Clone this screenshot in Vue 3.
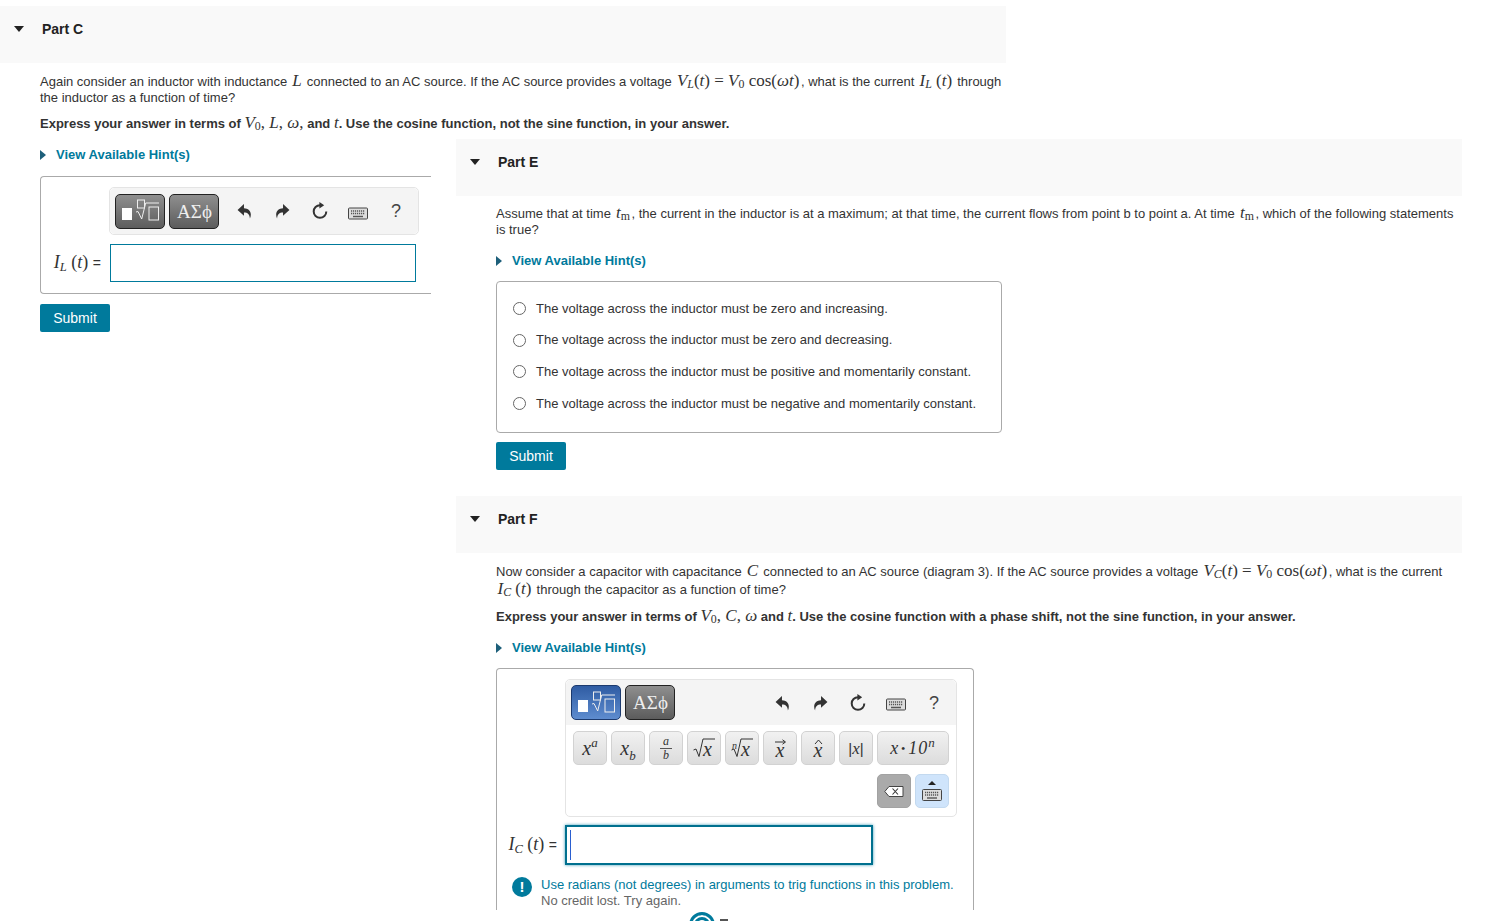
<template>
  <div class="page">
    <section class="part part-left">
      <header class="part-head">
        <span class="caret"></span>
        <h3>Part C</h3>
      </header>
      <div class="part-body">
        <p class="prompt">
          Again consider an inductor with inductance <i class="m big">L</i> connected to an AC source. If the AC source provides a voltage
          <span class="m big"><i>V<sub>L</sub></i>(<i>t</i>) = <i>V</i><sub>0</sub> cos(<i>ωt</i>)</span>, what is the current
          <span class="m big"><i>I<sub>L</sub></i> (<i>t</i>)</span> through the inductor as a function of time?
        </p>
        <p class="prompt strong">
          Express your answer in terms of <span class="m big"><i>V</i><sub>0</sub>, <i>L</i>, <i>ω</i>,</span> and <i class="m big">t</i>. Use the cosine function, not the sine function, in your answer.
        </p>
        <a class="hints"><span class="hint-arrow"></span>View Available Hint(s)</a>
        <div class="answer answer-c">
          <div class="toolbar">
            <div class="toolbar-top">
              <button class="mode">
                <span class="tmpl"></span>
                <svg class="radical" viewBox="0 0 25 22"><rect x="2.5" y="1" width="7" height="8" /><path d="M1 13l2-.5 3.700 7.500 4-16H24" /><rect x="14" y="8" width="9.500" height="13" /></svg>
              </button>
              <button class="mode greek">ΑΣϕ</button>
              <div class="tools">
                <span class="slot"><svg class="tool" viewBox="0 0 14 15"><path :d="undoPath" /></svg></span>
                <span class="slot"><svg class="tool flip" viewBox="0 0 14 15"><path :d="undoPath" /></svg></span>
                <span class="slot"><svg class="reset" viewBox="0 0 18 18"><path class="ring" d="M9 3.200a6.300 6.300 0 1 0 6.300 6.300" /><path d="M8.400 0l4.800 3.200-4.800 3.200z" /></svg></span>
                <span class="slot"><svg class="kb" viewBox="0 0 20 12"><rect x=".5" y=".5" width="19" height="11" rx="1" /><path class="kb-keys" d="M3 3.500h14M3 6h14" /><path class="kb-bar" d="M5 9h10" /></svg></span>
                <span class="slot help">?</span>
              </div>
            </div>
          </div>
          <div class="input-row">
            <label class="m math-label"><i>I<sub>L</sub></i> (<i>t</i>) <span class="eq">=</span></label>
            <div class="input"></div>
          </div>
        </div>
        <button class="submit">Submit</button>
      </div>
    </section>

    <div class="col-right">
      <section class="part part-e">
        <header class="part-head">
          <span class="caret"></span>
          <h3>Part E</h3>
        </header>
        <div class="part-body">
          <p class="prompt">
            Assume that at time <span class="m big"><i>t</i><sub>m</sub></span>, the current in the inductor is at a maximum; at that time, the current flows from point b to point a. At time <span class="m big"><i>t</i><sub>m</sub></span>, which of the following statements is true?
          </p>
          <a class="hints"><span class="hint-arrow"></span>View Available Hint(s)</a>
          <div class="choices">
            <label v-for="c in choices" :key="c" class="choice"><span class="radio"></span>{{ c }}</label>
          </div>
          <button class="submit">Submit</button>
        </div>
      </section>

      <section class="part part-f">
        <header class="part-head">
          <span class="caret"></span>
          <h3>Part F</h3>
        </header>
        <div class="part-body">
          <p class="prompt">
            Now consider a capacitor with capacitance <i class="m big">C</i> connected to an AC source (diagram 3). If the AC source provides a voltage
            <span class="m big"><i>V<sub>C</sub></i>(<i>t</i>) = <i>V</i><sub>0</sub> cos(<i>ωt</i>)</span>, what is the current
            <span class="m big"><i>I<sub>C</sub></i> (<i>t</i>)</span> through the capacitor as a function of time?
          </p>
          <p class="prompt strong">
            Express your answer in terms of <span class="m big"><i>V</i><sub>0</sub>, <i>C</i>, <i>ω</i></span> and <i class="m big">t</i>. Use the cosine function with a phase shift, not the sine function, in your answer.
          </p>
          <a class="hints"><span class="hint-arrow"></span>View Available Hint(s)</a>
          <div class="answer answer-f">
            <div class="toolbar">
              <div class="toolbar-top">
                <button class="mode active">
                  <span class="tmpl"></span>
                  <svg class="radical" viewBox="0 0 25 22"><rect x="2.5" y="1" width="7" height="8" /><path d="M1 13l2-.5 3.700 7.500 4-16H24" /><rect x="14" y="8" width="9.500" height="13" /></svg>
                </button>
                <button class="mode greek">ΑΣϕ</button>
                <div class="tools">
                  <span class="slot"><svg class="tool" viewBox="0 0 14 15"><path :d="undoPath" /></svg></span>
                  <span class="slot"><svg class="tool flip" viewBox="0 0 14 15"><path :d="undoPath" /></svg></span>
                  <span class="slot"><svg class="reset" viewBox="0 0 18 18"><path class="ring" d="M9 3.200a6.300 6.300 0 1 0 6.300 6.300" /><path d="M8.400 0l4.800 3.200-4.800 3.200z" /></svg></span>
                  <span class="slot"><svg class="kb" viewBox="0 0 20 12"><rect x=".5" y=".5" width="19" height="11" rx="1" /><path class="kb-keys" d="M3 3.500h14M3 6h14" /><path class="kb-bar" d="M5 9h10" /></svg></span>
                  <span class="slot help">?</span>
                </div>
              </div>
              <div class="keys">
                <button class="key"><i>x<sup>a</sup></i></button>
                <button class="key"><i>x<sub>b</sub></i></button>
                <button class="key frac"><i>a</i><i>b</i></button>
                <button class="key">
                  <span class="root"><svg viewBox="0 0 22 20"><path d="M.5 12l2.500-1 3 7.500L10 1h12" /></svg><i>x</i></span>
                </button>
                <button class="key">
                  <span class="root"><sup class="root-n">n</sup><svg viewBox="0 0 22 20"><path d="M.5 12l2.500-1 3 7.500L10 1h12" /></svg><i>x</i></span>
                </button>
                <button class="key accent"><svg class="acc" viewBox="0 0 11 6"><path d="M0 3h10M7.500 .8 10.500 3 7.500 5.200" /></svg><i>x</i></button>
                <button class="key accent"><svg class="acc" viewBox="0 0 11 6"><path d="M2 5l3.500-4L9 5" /></svg><i>x</i></button>
                <button class="key abs">|<i>x</i>|</button>
                <button class="key wide"><i>x</i><b class="dot">•</b><i>10<sup>n</sup></i></button>
              </div>
              <div class="keys keys-end">
                <button class="key del"><svg viewBox="0 0 20 11"><path d="M5 .5h14v10H5L.8 5.500z" fill="#fff" stroke="#444" /><path d="M8.500 2.500l5.500 6M14 2.500l-5.500 6" stroke="#333" stroke-width="1.100" /></svg></button>
                <button class="key kbd-toggle"><svg viewBox="0 0 20 22"><path d="M6 5l4-4 4 4z" fill="#222" /><rect x=".5" y="9.500" width="19" height="11" rx="1" fill="#ddd" stroke="#444" /><path d="M3 12.500h14M3 15h14" stroke="#555" stroke-width="1.400" stroke-dasharray="1.200 .8" /><path d="M5 18h10" stroke="#555" stroke-width="1.400" /></svg></button>
              </div>
            </div>
            <div class="input-row">
              <label class="m math-label"><i>I<sub>C</sub></i> (<i>t</i>) <span class="eq">=</span></label>
              <div class="input focused"><span class="cursor"></span></div>
            </div>
            <div class="feedback">
              <span class="alert">!</span>
              <div>
                <div class="alert-title">Use radians (not degrees) in arguments to trig functions in this problem.</div>
                <div class="alert-note">No credit lost. Try again.</div>
              </div>
            </div>
          </div>
        </div>
      </section>
      <span class="peek"></span>
      <span class="peek-text"></span>
    </div>
  </div>
</template>

<script setup>
const undoPath = 'M6.500 1 .5 6.500l6 5.500V8.800c3.600 0 5.200 1.700 5.600 5.700 2.400-5.500-.6-9.500-5.600-9.600z'

const choices = [
  'The voltage across the inductor must be zero and increasing.',
  'The voltage across the inductor must be zero and decreasing.',
  'The voltage across the inductor must be positive and momentarily constant.',
  'The voltage across the inductor must be negative and momentarily constant.',
]
</script>

<style>
html, body { background: #fff; overflow: hidden; }
</style>

<style scoped>
.page {
  display: flex;
  height: 921px;
  overflow: hidden;
  background: #fff;
  color: #333;
  font: 13px/16px "Liberation Sans", Arial, sans-serif;
}
.part-left {
  flex: 0 0 1006px;
  margin: 6px -550px 0 0;
}
.col-right {
  position: relative;
  flex: 0 0 1006px;
  margin-top: 139px;
  z-index: 1;
}
.part-head {
  display: flex;
  align-items: flex-start;
  height: 57px;
  background: #f9f9f9;
  padding-top: 14px;
  box-sizing: border-box;
}
.part-head h3 {
  margin: 0;
  font-size: 14px;
  line-height: 18px;
  font-weight: 700;
  color: #222;
}
.caret {
  width: 0;
  height: 0;
  margin: 6px 18px 0 14px;
  border-left: 5.500px solid transparent;
  border-right: 5.500px solid transparent;
  border-top: 6px solid #222;
}
.part-body { padding: 9px 0 0 40px; }
.prompt { margin: 0 0 8px; width: 966px; }
.part-f .prompt { margin-bottom: 9px; }
.part-e .prompt { margin-top: -1px; }
.strong { font-weight: 700; }
.m { font-family: "Liberation Serif", "Times New Roman", serif; }
.big { font-size: 17px; line-height: 1; margin: 0 1.500px; white-space: nowrap; }
.strong .m { font-weight: 400; margin: 0; }
sub, sup { font-size: 70%; line-height: 0; }
.big sub, .math-label sub { vertical-align: -0.2em; }
.hints {
  display: flex;
  align-items: center;
  margin-top: 15px;
  color: #007a9c;
  font-weight: 700;
}
.hint-arrow {
  width: 0;
  height: 0;
  margin-right: 10px;
  border-top: 5.500px solid transparent;
  border-bottom: 5.500px solid transparent;
  border-left: 6px solid #1d5f7a;
}
.answer {
  box-sizing: border-box;
  margin-top: 13px;
  border: 1px solid #aaa;
  border-radius: 4px;
}
.answer-c {
  width: 391px;
  height: 118px;
  padding: 10px 0 0 68px;
  border-right: 0;
  border-radius: 4px 0 0 4px;
}
.answer-f {
  width: 478px;
  height: 242px;
  margin-top: 12px;
  padding: 10px 0 0 68px;
  border-bottom: 0;
  border-radius: 4px 4px 0 0;
  overflow: hidden;
}
.toolbar {
  box-sizing: border-box;
  width: 310px;
  height: 48px;
  border: 1px solid #e4e4e4;
  border-radius: 5px;
}
.answer-f .toolbar { width: 392px; height: 138px; }
.toolbar-top {
  display: flex;
  align-items: center;
  gap: 4px;
  height: 46px;
  padding-left: 5px;
  box-sizing: border-box;
  background: #f4f4f4;
  border-radius: 5px;
}
.answer-f .toolbar-top { height: 45px; border-radius: 5px 5px 0 0; }
.mode {
  display: flex;
  align-items: center;
  justify-content: center;
  box-sizing: border-box;
  width: 50px;
  height: 35px;
  padding: 0 0 0 1px;
  border: 1px solid #222;
  border-radius: 5px;
  background: linear-gradient(#8f8f8f, #5c5c5c);
  color: #eee;
}
.greek { font: 19px/1 "Liberation Serif", "Times New Roman", serif; }
.mode.active { background: linear-gradient(#2f5ca3, #5e8ccf); border-color: #1c3a6e; }
.tmpl {
  width: 10px;
  height: 12px;
  margin-top: 6px;
  background: #fff;
}
.radical {
  width: 25px;
  height: 22px;
  margin: -2px 0 0 3px;
  fill: none;
  stroke: currentColor;
  stroke-width: 1;
}
.tools {
  display: flex;
  align-items: center;
  margin-left: auto;
  padding-right: 3px;
  color: #333;
}
.slot {
  display: flex;
  align-items: center;
  justify-content: center;
  width: 38px;
}
.tool {
  width: 15px;
  height: 16px;
  fill: currentColor;
}
.tool.flip { transform: scaleX(-1); }
.reset {
  width: 18px;
  height: 18px;
  fill: currentColor;
}
.ring {
  fill: none;
  stroke: currentColor;
  stroke-width: 2;
}
.kb {
  width: 20px;
  height: 13px;
  margin-top: 4px;
}
.kb rect { fill: #ddd; stroke: #444; }
.kb-keys { stroke: #555; stroke-width: 1.400; stroke-dasharray: 1.200 .8; fill: none; }
.kb-bar { stroke: #555; stroke-width: 1.400; fill: none; }
.help {
  font-size: 18px;
  color: #444;
}
.keys {
  display: flex;
  gap: 4px;
  padding: 6px 0 0 7px;
}
.keys-end { justify-content: flex-end; padding: 9px 7px 0 0; }
.key {
  display: flex;
  align-items: center;
  justify-content: center;
  box-sizing: border-box;
  width: 34px;
  height: 34px;
  padding: 0;
  border: 1px solid #d2d2d2;
  border-radius: 5px;
  background: linear-gradient(#f1f1f1, #dcdcdc);
  color: #333;
  font: 20px/1 "Liberation Serif", "Times New Roman", serif;
}
.key sup, .key sub { font-size: 13px; }
.key.wide { width: 72px; font-size: 18px; letter-spacing: 1px; }
.dot { font-size: 11px; margin: 0 2px; }
.frac { flex-direction: column; font-size: 12px; line-height: 13px; }
.frac i:first-child { border-bottom: 1px solid #555; padding: 0 3px; }
.root {
  position: relative;
  display: block;
  width: 22px;
  height: 20px;
}
.root svg {
  position: absolute;
  inset: 0;
  width: 22px;
  height: 20px;
  fill: none;
  stroke: #333;
}
.root i {
  position: absolute;
  left: 10px;
  top: 1px;
}
.key .root-n {
  position: absolute;
  left: 1px;
  top: 3px;
  font-size: 10px;
  font-style: italic;
  line-height: 1;
}
.accent { flex-direction: column; line-height: 15px; }
.accent i { margin-top: -2px; }
.acc {
  width: 11px;
  height: 6px;
  fill: none;
  stroke: #333;
}
.abs { font-size: 15px; font-family: "Liberation Sans", Arial, sans-serif; }
.abs i { font-family: "Liberation Serif", "Times New Roman", serif; font-size: 17px; }
.del { background: #aaa; border-color: #a2a2a2; }
.del svg { width: 20px; height: 11px; }
.kbd-toggle { background: #cfe4fb; border-color: #c3d9ef; }
.kbd-toggle svg { width: 20px; height: 22px; }
.input-row {
  display: flex;
  align-items: center;
  margin: 9px 0 0 -57px;
}
.answer-f .input-row { margin-top: 8px; }
.math-label {
  display: inline-flex;
  align-items: baseline;
  justify-content: flex-end;
  white-space: pre;
  width: 49px;
  margin: -2px 9px 0 0;
  font-size: 18px;
}
.answer-f .math-label { width: 49px; margin-right: 8px; }
.eq { font: 14px "Liberation Sans", Arial, sans-serif; }
.input {
  box-sizing: border-box;
  width: 306px;
  height: 38px;
  border: 1px solid #007a9c;
}
.input.focused {
  position: relative;
  width: 308px;
  height: 40px;
  border: 2px solid #00708f;
  box-shadow: 0 0 3px #3d9cb8;
}
.cursor {
  position: absolute;
  left: 3px;
  top: 3px;
  width: 1px;
  height: 30px;
  background: #2a5fd0;
}
.feedback {
  display: flex;
  gap: 9px;
  margin: 12px 0 0 -53px;
  line-height: 16px;
}
.alert {
  flex: 0 0 20px;
  height: 20px;
  border-radius: 50%;
  background: #007a9c;
  color: #fff;
  font: 700 15px/20px "Liberation Sans", Arial, sans-serif;
  text-align: center;
}
.alert-title { color: #007a9c; }
.alert-note { color: #666; }
.submit {
  display: block;
  width: 70px;
  height: 28px;
  margin-top: 10px;
  padding: 0;
  border: 0;
  border-radius: 2px;
  background: #007a9c;
  color: #fff;
  font: 14px/28px "Liberation Sans", Arial, sans-serif;
}
.part-e .submit { margin-top: 9px; }
.choices {
  box-sizing: border-box;
  width: 506px;
  height: 152px;
  margin-top: 12px;
  padding: 11px 16px 0;
  border: 1px solid #aaa;
  border-radius: 4px;
}
.choice {
  display: flex;
  align-items: center;
  height: 31.600px;
}
.radio {
  box-sizing: border-box;
  width: 13px;
  height: 13px;
  margin-right: 10px;
  border: 1px solid #666;
  border-radius: 50%;
}
.part-f { margin-top: 26px; }
.peek {
  position: absolute;
  left: 233px;
  top: 773px;
  width: 26px;
  height: 26px;
  box-sizing: border-box;
  border: 3px solid #007a9c;
  border-radius: 50%;
  box-shadow: inset 0 0 0 2px #fff, inset 0 0 0 5px #007a9c;
}
.peek-text {
  position: absolute;
  left: 264px;
  top: 780px;
  width: 8px;
  height: 2px;
  background: #555;
}
</style>
